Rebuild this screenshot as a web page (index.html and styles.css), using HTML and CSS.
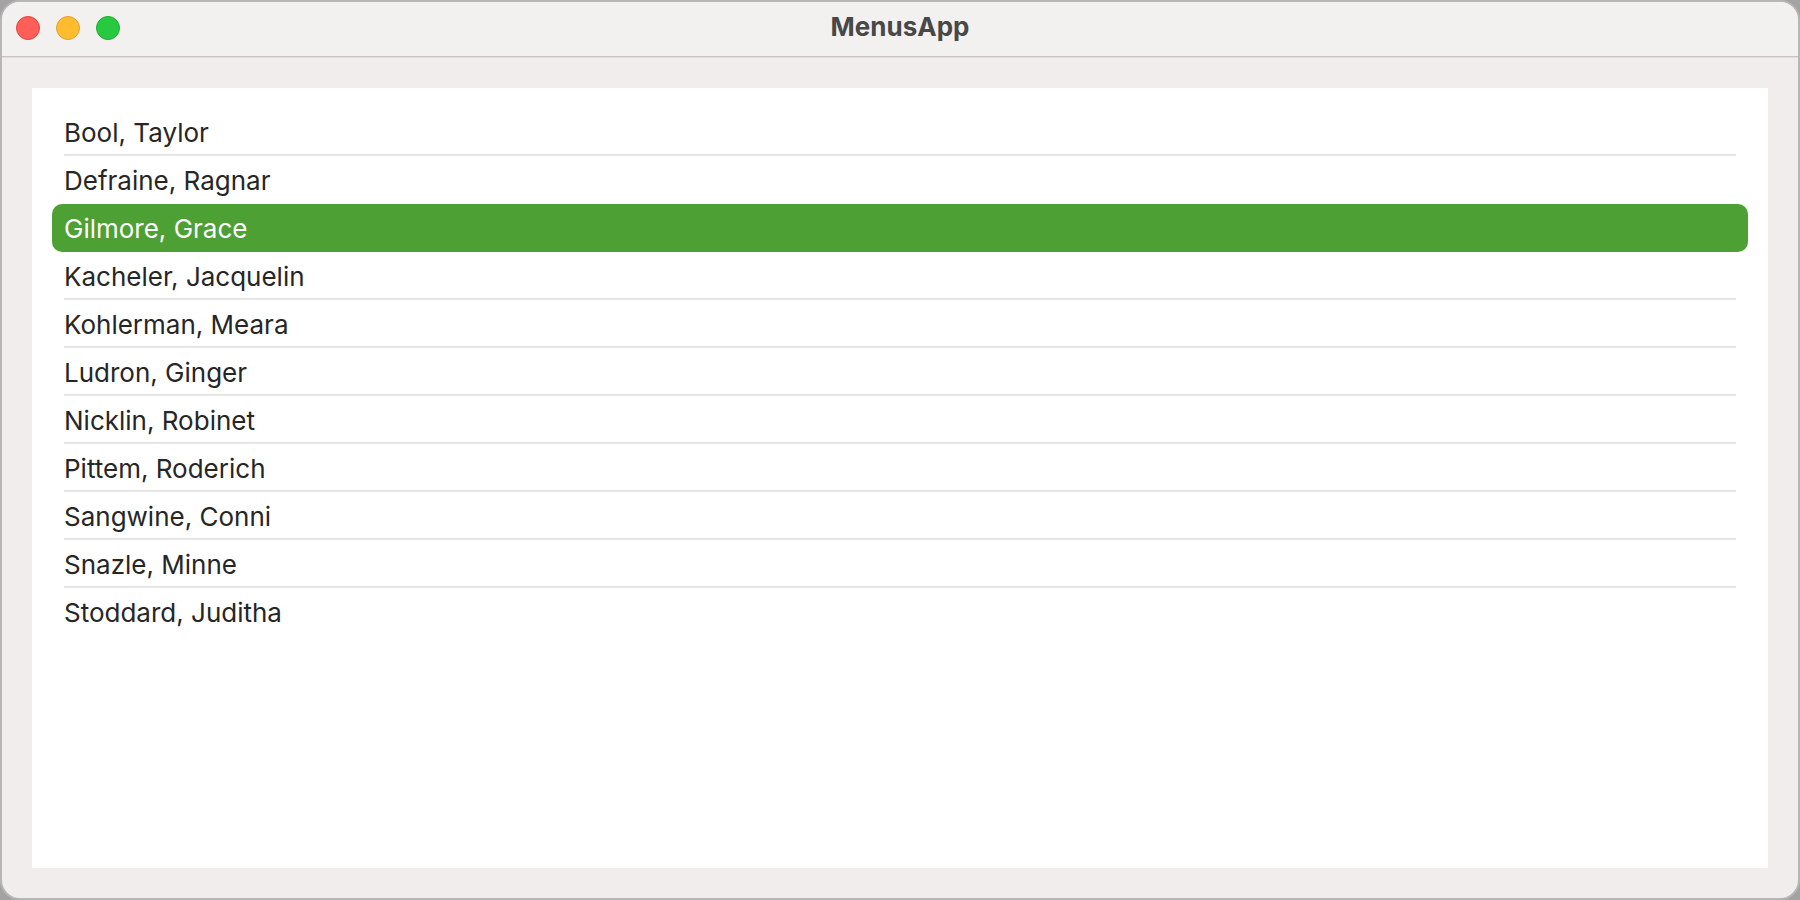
FILE: index.html
```html
<!DOCTYPE html>
<html lang="en">
<head>
    <meta charset="UTF-8">
    <meta name="viewport" content="width=device-width, initial-scale=1.0">
    <title>MenusApp</title>
    <link rel="stylesheet" href="styles.css">
</head>
<body>
    <div class="window">
        <header class="titlebar">
            <div class="controls">
                <button type="button" class="control close" aria-label="Close"></button>
                <button type="button" class="control minimize" aria-label="Minimize"></button>
                <button type="button" class="control zoom" aria-label="Zoom"></button>
            </div>
            <h1 class="title">MenusApp</h1>
        </header>

        <main class="content">
            <ul class="people" role="listbox" aria-label="People">
                <li class="person" role="option"><span class="name">Bool, Taylor</span></li>
                <li class="person" role="option"><span class="name">Defraine, Ragnar</span></li>
                <li class="person selected" role="option" aria-selected="true"><span class="name">Gilmore, Grace</span></li>
                <li class="person" role="option"><span class="name">Kacheler, Jacquelin</span></li>
                <li class="person" role="option"><span class="name">Kohlerman, Meara</span></li>
                <li class="person" role="option"><span class="name">Ludron, Ginger</span></li>
                <li class="person" role="option"><span class="name">Nicklin, Robinet</span></li>
                <li class="person" role="option"><span class="name">Pittem, Roderich</span></li>
                <li class="person" role="option"><span class="name">Sangwine, Conni</span></li>
                <li class="person" role="option"><span class="name">Snazle, Minne</span></li>
                <li class="person" role="option"><span class="name">Stoddard, Juditha</span></li>
            </ul>
        </main>
    </div>
</body>
</html>
```
FILE: styles.css
```css
* {
    box-sizing: border-box;
}

body {
    margin: 0;
    background: #a3a3a3;
    font-family: Inter, "Liberation Sans", sans-serif;
}

.window {
    display: flex;
    flex-direction: column;
    min-height: 100vh;
    border: 2px solid #b7b5b5;
    border-radius: 20px;
    background: #f0edec;
    overflow: hidden;
}

.titlebar {
    display: grid;
    grid-template-columns: 1fr auto 1fr;
    align-items: center;
    height: 55px;
    margin-bottom: 1px;
    padding: 0 14px 2px;
    background: #f3f1f0;
    border-bottom: 1px solid #c6c4c4;
    box-shadow: 0 1px 0 #e0dddc;
}

.controls {
    display: flex;
    gap: 16px;
}

.control {
    width: 24px;
    height: 24px;
    padding: 0;
    border: 1px solid;
    border-radius: 50%;
}

.close {
    background: #ff5f57;
    border-color: #e0443e;
}

.minimize {
    background: #febc2e;
    border-color: #dea034;
}

.zoom {
    background: #28c840;
    border-color: #1dad2b;
}

.title {
    margin: 0;
    padding-bottom: 2px;
    font-size: 26px;
    font-weight: 700;
    line-height: 32px;
    color: #484848;
}

.content {
    display: flex;
    flex: 1;
    padding: 30px;
}

.people {
    flex: 1;
    margin: 0;
    padding: 20px;
    list-style: none;
    background: #fff;
}

.person {
    padding: 0 12px;
    border-radius: 10px;
    color: #262626;
    cursor: default;
}

.name {
    display: block;
    height: 48px;
    border-bottom: 2px solid #e5e5e5;
    font-size: 26px;
    line-height: 50px;
}

.person:last-child .name {
    border-bottom-color: transparent;
}

.selected {
    background: #4da033;
    color: #fff;
}

.selected .name {
    border-bottom-color: transparent;
}

/* no separator above the highlighted row */
.person:has(+ .selected) .name {
    border-bottom-color: transparent;
}
```
